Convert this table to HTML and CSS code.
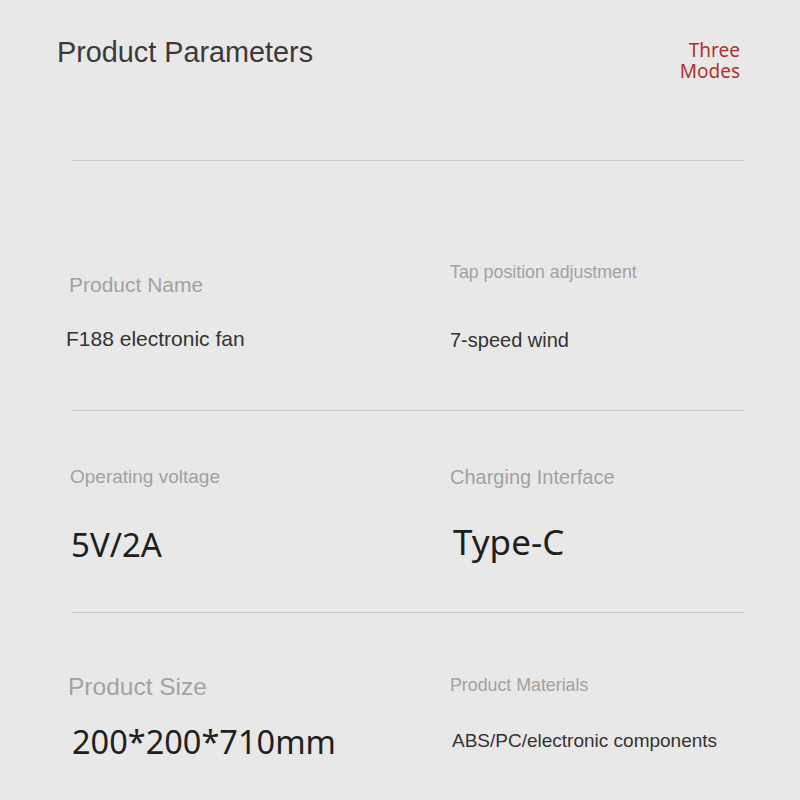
FILE: index.html
```html
<!DOCTYPE html>
<html lang="en">
<head>
<meta charset="utf-8">
<title>Product Parameters</title>
<link rel="stylesheet" href="styles.css">
</head>
<body>
<div class="page">
  <header class="header">
    <h1 class="title">Product Parameters</h1>
    <div class="modes">
      <div class="modes-line">Three</div>
      <div class="modes-line">Modes</div>
    </div>
  </header>
  <div class="divider divider-first"></div>

  <section class="row row-1">
    <div class="cell cell-name">
      <div class="label label-name">Product Name</div>
      <div class="value value-name">F188 electronic fan</div>
    </div>
    <div class="cell cell-tap">
      <div class="label label-tap">Tap position adjustment</div>
      <div class="value value-tap">7-speed wind</div>
    </div>
  </section>
  <div class="divider"></div>

  <section class="row row-2">
    <div class="cell cell-volt">
      <div class="label label-volt">Operating voltage</div>
      <div class="big big-volt">5V/2A</div>
    </div>
    <div class="cell cell-charge">
      <div class="label label-charge">Charging Interface</div>
      <div class="big big-charge">Type-C</div>
    </div>
  </section>
  <div class="divider"></div>

  <section class="row row-3">
    <div class="cell cell-size">
      <div class="label label-size">Product Size</div>
      <div class="big big-size">200*200*710mm</div>
    </div>
    <div class="cell cell-mat">
      <div class="label label-mat">Product Materials</div>
      <div class="value value-mat">ABS/PC/electronic components</div>
    </div>
  </section>
</div>
</body>
</html>
```

FILE: styles.css
```css
html, body {
  margin: 0;
  padding: 0;
  background: #e9e8e8;
}

.page {
  width: 800px;
  height: 800px;
  overflow: hidden;
  font-family: "Liberation Sans", Arial, sans-serif;
}

.header {
  display: flex;
  justify-content: space-between;
  align-items: flex-start;
  padding: 38px 60px 0 57px;
}

.title {
  margin: 0;
  font-size: 28.8px;
  line-height: 1;
  font-weight: 400;
  color: #3a3a3a;
}

.modes {
  margin-top: 2px;
  font-family: "Noto Sans", sans-serif;
  font-size: 19px;
  color: #b0302c;
  text-align: right;
}

.modes-line {
  height: 21px;
  line-height: 21px;
}

.divider {
  margin-left: 72px;
  width: 672px;
  height: 1px;
  background: #cbcaca;
}

.divider-first {
  margin-top: 78px;
}

.row {
  display: grid;
  grid-template-columns: 382px 1fr;
  padding-left: 67px;
}

.row-1 { height: 249px; }
.row-2 { height: 201px; }
.row-3 { height: 187px; }

.label {
  line-height: 1;
  color: #a2a2a2;
}

.value {
  line-height: 1;
  color: #333333;
}

.big {
  font-family: "Noto Sans", sans-serif;
  line-height: 1;
  color: #202020;
}

/* row 1 */
.label-name { font-size: 21px; margin-top: 113px; margin-left: 2px; }
.value-name { font-size: 21px; margin-top: 33px; margin-left: -1px; }
.label-tap { font-size: 17.8px; margin-top: 103px; margin-left: 1px; }
.value-tap { font-size: 20px; margin-top: 48px; margin-left: 1px; }

/* row 2 */
.label-volt { font-size: 19px; margin-top: 56px; margin-left: 3px; }
.big-volt { font-size: 33px; margin-top: 42px; margin-left: 4px; }
.label-charge { font-size: 20px; margin-top: 56px; margin-left: 1px; }
.big-charge { font-size: 35px; margin-top: 37px; margin-left: 4px; }

/* row 3 */
.label-size { font-size: 24.5px; margin-top: 62px; margin-left: 1px; }
.big-size { font-size: 32.5px; margin-top: 26px; margin-left: 5px; }
.label-mat { font-size: 17.8px; margin-top: 64px; margin-left: 1px; }
.value-mat { font-size: 19px; margin-top: 36px; margin-left: 3px; }
```
